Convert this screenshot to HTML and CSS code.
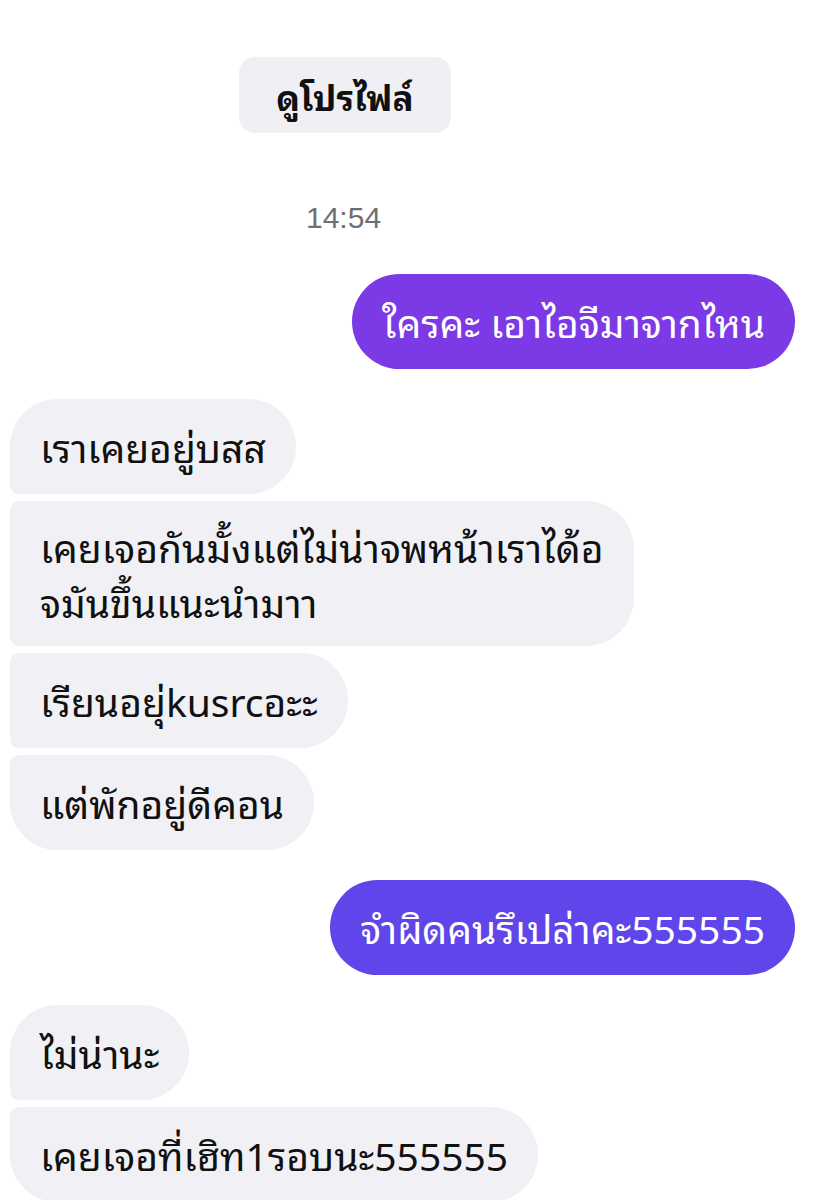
FILE: index.html
```html
<!DOCTYPE html>
<html>
<head>
  <title>Chat</title>
  <link rel="stylesheet" href="styles.css">
</head>
<body>
  <div class="chat">
    <a class="profile-btn" href="#">ดูโปรไฟล์</a>

    <div class="time">14:54</div>

    <div class="row out">
      <div class="bubble mine violet">ใครคะ เอาไอจีมาจากไหน</div>
    </div>

    <div class="group">
      <div class="bubble theirs first">เราเคยอยู่บสส</div>
      <div class="bubble theirs mid multi">เคยเจอกันมั้งแต่ไม่น่าจพหน้าเราได้อ<br>จมันขึ้นแนะนำมาา</div>
      <div class="bubble theirs mid">เรียนอยุ่kusrcอะะ</div>
      <div class="bubble theirs last">แต่พักอยู่ดีคอน</div>
    </div>

    <div class="row out">
      <div class="bubble mine indigo">จำผิดคนรึเปล่าคะ555555</div>
    </div>

    <div class="group">
      <div class="bubble theirs first">ไม่น่านะ</div>
      <div class="bubble theirs last">เคยเจอที่เฮิท1รอบนะ555555</div>
    </div>
  </div>
</body>
</html>
```

FILE: styles.css
```css
body {
  margin: 0;
  background-color: #fff;
  font-family: "Noto Sans Thai Looped", "Noto Sans Thai", "Noto Sans", "DejaVu Sans", sans-serif;
  color: #111;
}

.chat {
  display: flex;
  flex-direction: column;
  padding-top: 57px;
}

.profile-btn {
  align-self: flex-start;
  margin-left: 239px;
  width: 212px;
  height: 76px;
  display: flex;
  align-items: center;
  justify-content: center;
  background-color: #f0f0f4;
  border-radius: 16px;
  color: #111;
  text-decoration: none;
  font-size: 35px;
  font-weight: bold;
}

.time {
  align-self: flex-start;
  margin: 70px 0 41px 306px;
  height: 30px;
  line-height: 30px;
  font-family: "Liberation Sans", Arial, sans-serif;
  font-size: 30px;
  color: #6e6e73;
}

.row.out {
  display: flex;
  justify-content: flex-end;
  padding-right: 20px;
}

.group {
  display: flex;
  flex-direction: column;
  align-items: flex-start;
  gap: 7px;
  padding-left: 10px;
  margin: 30px 0;
}

.bubble {
  padding: 22px 30px 23px;
  font-size: 39px;
  line-height: 50px;
  border-radius: 48px;
}

.bubble.multi {
  padding-top: 17px;
  padding-bottom: 18px;
  line-height: 55px;
}

.mine {
  color: #fff;
}

.violet {
  background-color: #7c3ae6;
}

.indigo {
  background-color: #5f45ea;
}

.theirs {
  background-color: #f0f0f5;
  color: #111;
}

.theirs.first {
  border-bottom-left-radius: 9px;
}

.theirs.mid {
  border-top-left-radius: 9px;
  border-bottom-left-radius: 9px;
}

.theirs.last {
  border-top-left-radius: 9px;
}
```
